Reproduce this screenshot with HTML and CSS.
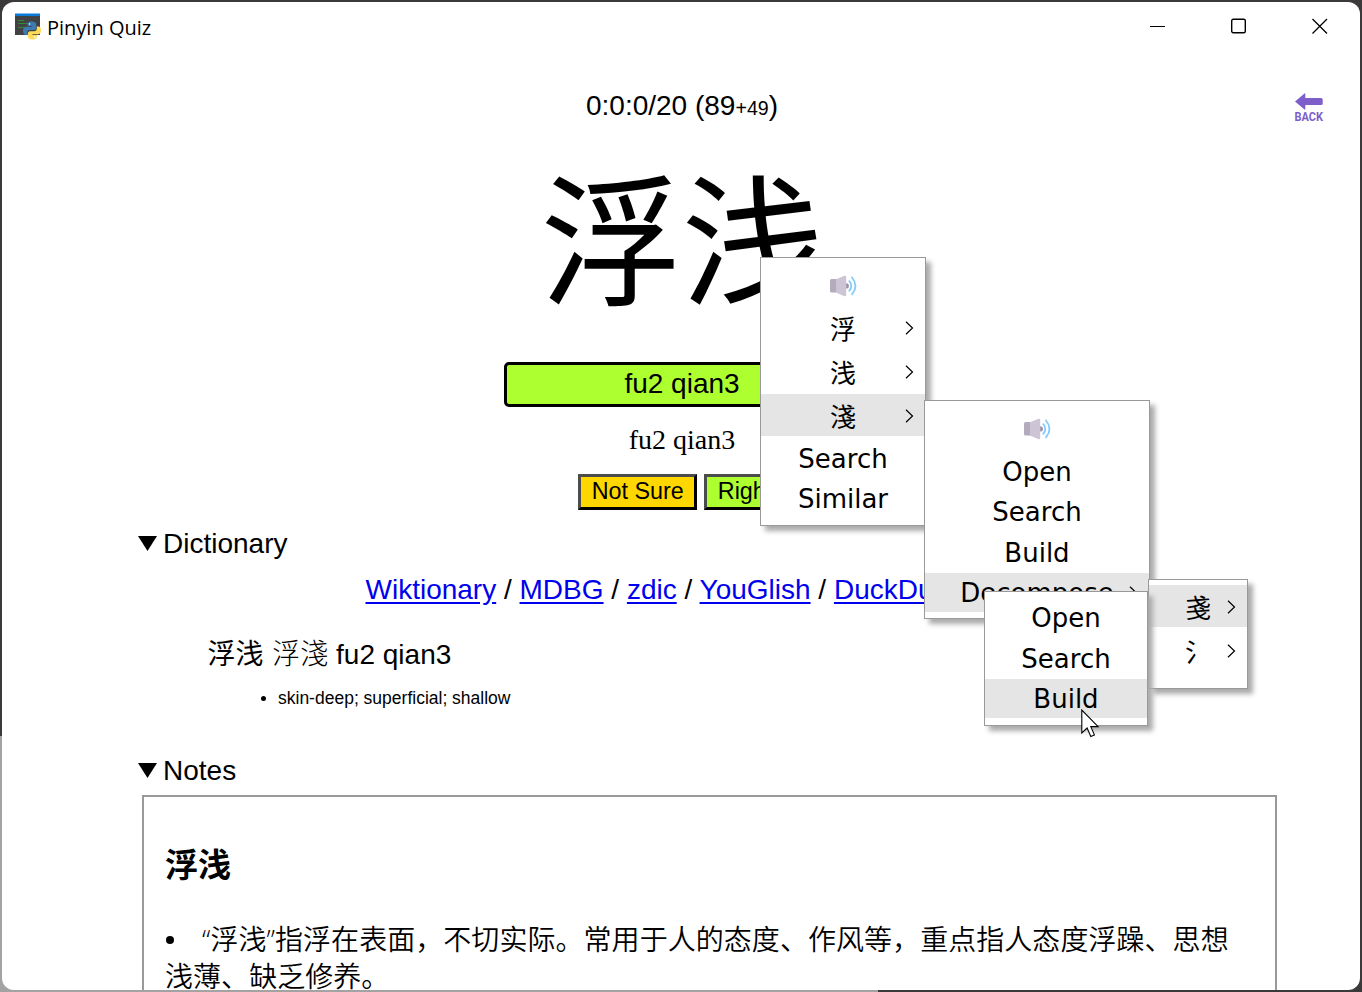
FILE: index.html
```html
<!DOCTYPE html>
<html lang="zh-CN">
<head>
<meta charset="utf-8">
<title>Pinyin Quiz</title>
<link rel="stylesheet" href="styles.css">
</head>
<body>
<svg class="defs" width="0" height="0">
  <symbol id="speaker" viewBox="0 0 28 22">
    <path d="M0 5.500q0-1.500 1.500-1.500H7v13.500H1.500Q0 17.500 0 16z" fill="#b4acbc"/>
    <path d="M6 4.200 14.500.8q1.700-.4 1.700 1v18.400q0 1.400-1.700 1L6 17.500z" fill="#cdc4d6"/>
    <path d="M16.200 8.200a2.700 2.700 0 0 1 0 5.400z" fill="#998ea4"/>
    <path d="M19.300 6.200q4 4.700 0 9.500M22 2.500q7 8.400 0 16.800" fill="none" stroke="#83cbff" stroke-width="1.800" stroke-linecap="round"/>
  </symbol>
  <symbol id="chevron" viewBox="0 0 9 14">
    <path d="M1 .8 7.500 7 1 13.200" fill="none" stroke="#000" stroke-width="1.200"/>
  </symbol>
</svg>
<div class="window">
  <header class="titlebar">
    <svg class="app-icon" viewBox="0 0 26 27">
      <path d="M0 1h25v21H0z" fill="#404244"/>
      <path d="M0 .5h25V3H0z" fill="#0a7ad8"/>
      <path d="M3 7.500h6M3 10.500h10M3 14.500h6" stroke="#2f8a35" stroke-width="1"/>
      <path d="M16.500 8.500c-3.500 0-4 1.400-4 3V13h4.500v.8h-6.200c-1.800 0-2.800 1.700-2.800 4s1 4 2.600 4h1.600v-2.200c0-1.500 1.200-2.500 2.600-2.500h4.200c1.300 0 2.200-1 2.200-2.300v-3.300c0-1.800-1.600-3-4.700-3z" fill="#3c7ab0"/>
      <path d="M17.500 26.500c3.300 0 4.400-1.300 4.400-3V22h-4.500v-.8h6.100c1.800 0 2.500-1.900 2.500-3.900s-.9-3.800-2.500-3.800h-1.700v2c0 1.700-1 2.700-2.500 2.700h-4.200c-1.300 0-2.300 1-2.300 2.300v3c0 1.800 1.700 3 4.700 3z" fill="#ffdc58"/>
      <circle cx="14.600" cy="11" r=".8" fill="#fff"/>
      <circle cx="19.700" cy="24.100" r=".8" fill="#fff"/>
    </svg>
    <span class="title">Pinyin Quiz</span>
    <div class="controls">
      <svg viewBox="0 0 16 16"><path d="M0 8.500h15" stroke="#000"/></svg>
      <svg viewBox="0 0 16 16"><rect x=".7" y="1.200" width="13.600" height="13.600" rx="1.500" fill="none" stroke="#000" stroke-width="1.400"/></svg>
      <svg viewBox="0 0 16 16"><path d="M.5 1 15 15.500M15 1 .5 15.500" stroke="#000" stroke-width="1.300"/></svg>
    </div>
  </header>
  <main class="page">
    <svg class="back" viewBox="0 0 30 30">
      <path d="M1 8.500 10.500.4Q11.300 0 11.300 1v4H27q1.700 0 1.700 1.500V11q0 1-1.700 1H11.300v4q0 1-.8.6z" fill="#7d5ecb"/>
      <text x=".5" y="28.300" textLength="28.500" lengthAdjust="spacingAndGlyphs">BACK</text>
    </svg>
    <p class="score">0:0:0/20 (89<small>+49</small>)</p>
    <div class="word">浮浅</div>
    <div class="answer">fu2 qian3</div>
    <div class="reading">fu2 qian3</div>
    <div class="grades">
      <button class="unsure">Not Sure</button>
      <button class="right">Right</button>
    </div>
    <section class="section">
      <h2 class="summary"><svg viewBox="0 0 20 15"><path d="M0 0h19L9.500 15z"/></svg>Dictionary</h2>
      <nav class="links"><a href="#">Wiktionary</a> / <a href="#">MDBG</a> / <a href="#">zdic</a> / <a href="#">YouGlish</a> / <a href="#">DuckDuckGo</a></nav>
      <div class="entry">浮浅 <span class="trad">浮淺</span> fu2 qian3</div>
      <div class="sense"><i class="dot"></i>skin-deep; superficial; shallow</div>
    </section>
    <section class="section">
      <h2 class="summary"><svg viewBox="0 0 20 15"><path d="M0 0h19L9.500 15z"/></svg>Notes</h2>
      <article class="notes">
        <h3>浮浅</h3>
        <p><i class="dot"></i>“浮浅”指浮在表面，不切实际。常用于人的态度、作风等，重点指人态度浮躁、思想<br>浅薄、缺乏修养。</p>
      </article>
    </section>
  </main>
</div>

<div class="menu menu-word">
  <div class="item sound"><svg><use href="#speaker"/></svg></div>
  <div class="item han">浮<svg class="more"><use href="#chevron"/></svg></div>
  <div class="item han">浅<svg class="more"><use href="#chevron"/></svg></div>
  <div class="item han active">淺<svg class="more"><use href="#chevron"/></svg></div>
  <div class="item">Search</div>
  <div class="item">Similar</div>
</div>
<div class="menu menu-char">
  <div class="item sound"><svg><use href="#speaker"/></svg></div>
  <div class="item">Open</div>
  <div class="item">Search</div>
  <div class="item">Build</div>
  <div class="item active">Decompose<svg class="more"><use href="#chevron"/></svg></div>
</div>
<div class="menu menu-parts">
  <div class="item han active">戔<svg class="more"><use href="#chevron"/></svg></div>
  <div class="item han">氵<svg class="more"><use href="#chevron"/></svg></div>
</div>
<div class="menu menu-part">
  <div class="item">Open</div>
  <div class="item">Search</div>
  <div class="item active">Build</div>
</div>
<svg class="cursor" viewBox="0 0 19 29"><path d="M.8 1v23l5.300-5 3.700 8.500 3.600-1.600-3.600-8.300h7.300z" fill="#fff" stroke="#000" stroke-width="1.100"/></svg>
</body>
</html>
```
FILE: styles.css
```css
* { box-sizing: border-box; }
html, body { margin: 0; height: 100%; overflow: hidden; }
body {
  position: relative;
  padding: 2px;
  color: #000;
  font: 28px/32px "Liberation Sans", "Noto Sans CJK SC", sans-serif;
  background:
    linear-gradient(#3b3939, #3b3939) right bottom / 484px 992px no-repeat,
    linear-gradient(#3b3939 0 736px, #a3a3a3 736px);
}
h2, h3, p { margin: 0; font-weight: 400; }
.defs { position: absolute; }
.window {
  width: 1358px;
  height: 988px;
  overflow: hidden;
  background: #fff;
  border-radius: 12px;
}
.titlebar { display: flex; align-items: center; height: 50px; padding: 0 32px 0 13px; }
.app-icon { width: 26px; height: 27px; margin-top: -1px; }
.title { margin: 2px 0 0 6px; font: 20px/26px "Open Sans", sans-serif; }
.controls { display: flex; gap: 65px; margin: -2px 0 0 auto; }
.controls svg { display: block; width: 16px; height: 16px; }

.page { position: relative; padding-top: 38px; }
.back { position: absolute; left: 1292px; top: 41px; width: 30px; height: 30px; }
.back text { font: bold 13px Roboto, sans-serif; fill: #7d5ecb; }
.score { padding-left: 2px; text-align: center; }
.score small { font-size: 19.600px; line-height: 1; }
.word { margin-top: 41px; padding-left: 1px; font: 142px/140px "Noto Sans CJK SC", sans-serif; letter-spacing: -1px; text-align: center; }
.answer {
  width: 354px;
  height: 45px;
  margin: 59px auto 0;
  padding: 3px 0 0 2px;
  text-align: center;
  background: #adff2f;
  border: 3px solid #000;
  border-radius: 5px;
}
.reading { margin-top: 17px; padding-left: 2px; font-family: "Liberation Serif", serif; text-align: center; }
.grades { display: flex; justify-content: center; gap: 7px; margin-top: 18px; padding-left: 2px; }
.grades button {
  height: 36px;
  padding: 0 10.500px 2px;
  color: #000;
  font: 23.330px/28px "Liberation Sans", sans-serif;
  border: 3px solid #000;
  border-top-color: #4c4c4c;
  border-left-color: #4c4c4c;
}
.grades .unsure { background: #ffd700; }
.grades .right { background: #adff2f; }

.section { margin: 18px 83px 0 136px; }
.summary { display: flex; align-items: center; gap: 5px; font-size: 28px; line-height: 32px; }
.summary svg { width: 20px; height: 15px; margin-top: -1px; }
.links { margin: 14px 0 0 227.500px; white-space: nowrap; }
.links a { color: #00e; text-underline-offset: 3px; }
.entry { margin: 30px 0 0 69.500px; }
.trad { margin: 0 0 0 1px; font-family: "Noto Sans CJK TC", sans-serif; font-weight: 300; }
.sense { display: flex; align-items: center; margin: 17px 0 0 123px; font-size: 17.500px; line-height: 20px; }
.dot { display: inline-block; width: 5px; height: 5px; margin-right: 12px; background: #000; border-radius: 50%; }
.section + .section { margin-top: 47px; }
.notes {
  height: 240px;
  margin: 8px 0 0 4px;
  padding: 46px 21px 0;
  border: 2px solid #999;
  font-family: "Open Sans", "Noto Sans CJK SC", sans-serif;
  white-space: nowrap;
}
.notes h3 { font: bold 33px/40px "Noto Sans CJK SC", sans-serif; }
.notes p { margin-top: 38px; line-height: 37px; font-weight: 350; letter-spacing: .05px; }
.notes .dot { width: 8px; height: 8px; margin: 0 28px 6px 1px; }

.menu {
  position: absolute;
  padding-top: 6px;
  background: #fff;
  border: 1px solid #999;
  box-shadow: 5px 5px 5px #aaa;
  font: 26px/40px "DejaVu Sans", "Noto Sans CJK TC", sans-serif;
  text-align: center;
}
.menu-word { left: 760px; top: 257px; width: 166px; height: 269px; }
.menu-char { left: 924px; top: 400px; width: 226px; height: 219px; }
.menu-parts { left: 1148px; top: 579px; width: 100px; height: 110px; padding-top: 5px; }
.menu-part { left: 984px; top: 591px; width: 164px; height: 135px; line-height: 41px; }
.item { position: relative; height: 39px; margin-bottom: 1.500px; }
.han { height: 42px; margin-bottom: 2px; line-height: 44px; font-family: "Noto Sans CJK TC", sans-serif; }
.han.active + .item:not(.han) { margin-top: 2.500px; }
.active { background: #e5e5e5; }
.sound { display: flex; justify-content: center; height: 42px; margin: 0; padding: 11px 0 0 1px; }
.menu-char .sound { height: 44.500px; }
.sound svg { width: 28px; height: 22px; }
.more { position: absolute; right: 11px; top: 50%; width: 9px; height: 14px; margin-top: -6.500px; }
.cursor { position: absolute; left: 1081px; top: 709px; width: 19px; height: 29px; }
```
